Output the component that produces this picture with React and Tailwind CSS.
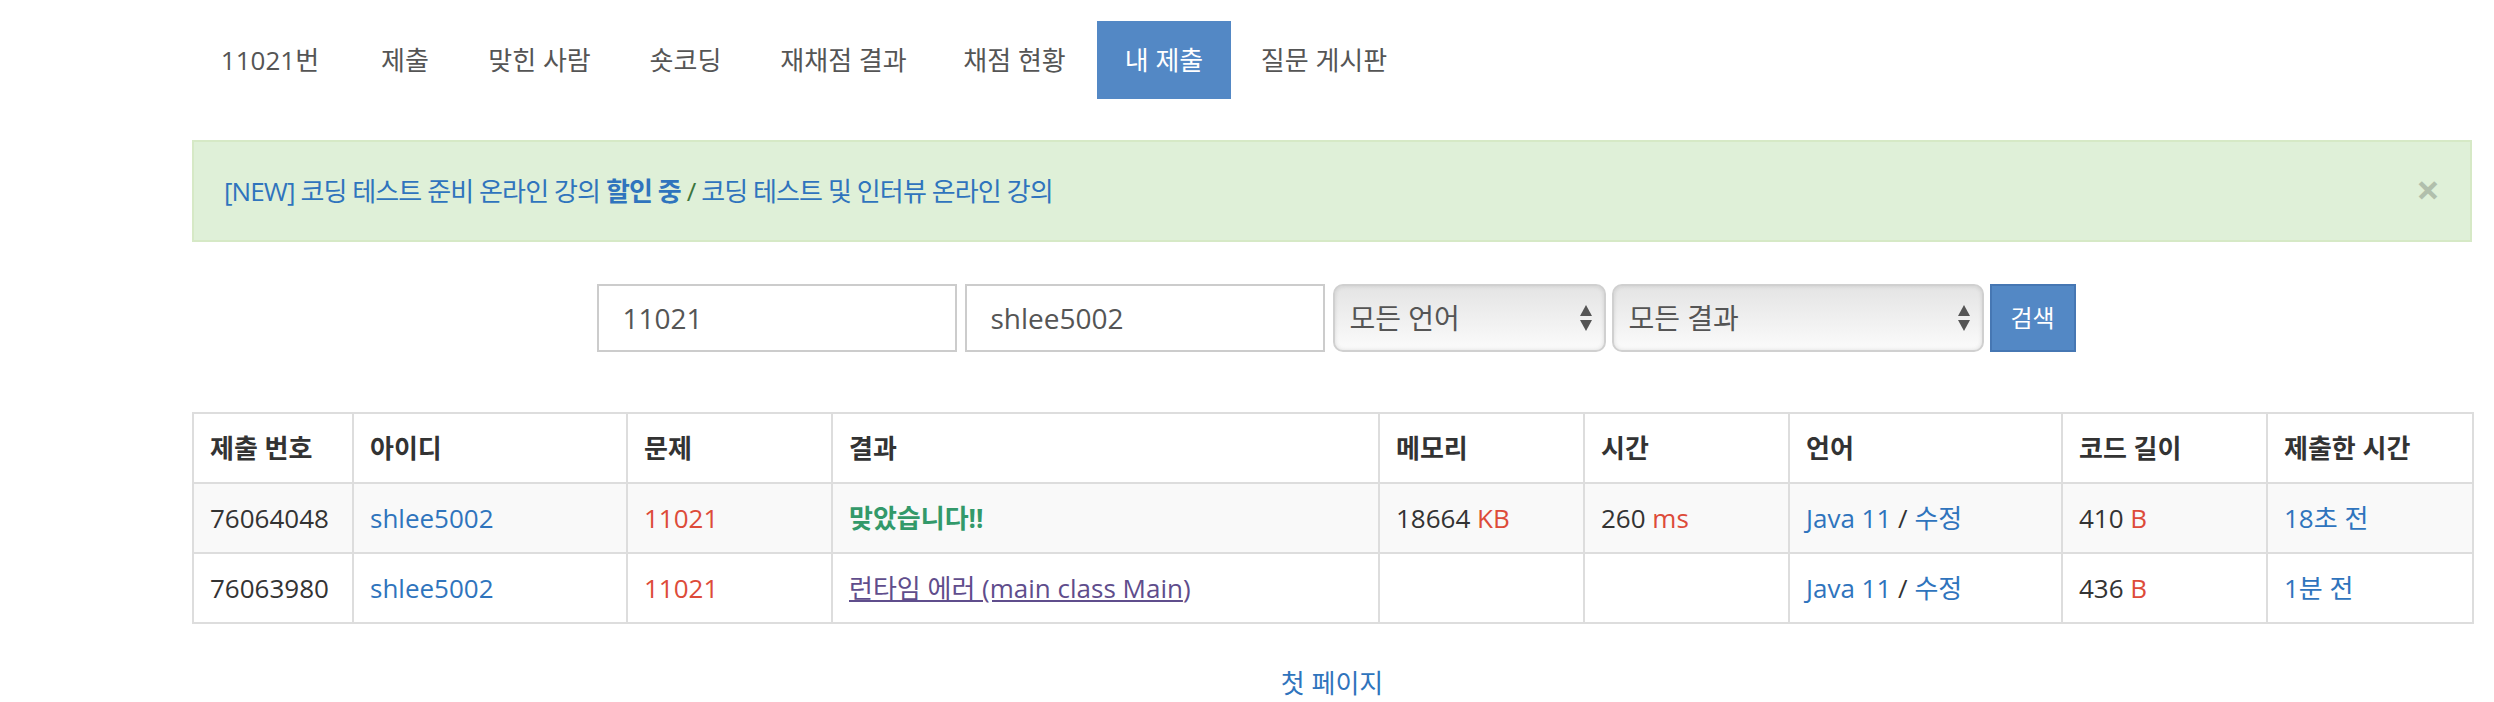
import React from "react";

const tabs = [
  { label: "11021번", w: "w-[154px]" },
  { label: "제출", w: "w-[108px]" },
  { label: "맞힌 사람", w: "w-[153px]" },
  { label: "숏코딩", w: "w-[131px]" },
  { label: "재채점 결과", w: "w-[177px]" },
  { label: "채점 현황", w: "w-[157px]" },
  { label: "내 제출", w: "w-[134px]", active: true },
  { label: "질문 게시판", w: "w-[178px]" },
];

const headers = ["제출 번호", "아이디", "문제", "결과", "메모리", "시간", "언어", "코드 길이", "제출한 시간"];
const colW = ["w-[160px]", "w-[274px]", "w-[205px]", "w-[547px]", "w-[205px]", "w-[205px]", "w-[273px]", "w-[205px]", "w-[206px]"];

function Arrows() {
  return (
    <svg width="12" height="26" viewBox="0 0 12 26" className="shrink-0">
      <polygon points="6,0 12,11 0,11" fill="#555" />
      <polygon points="0,15 12,15 6,26" fill="#555" />
    </svg>
  );
}

function Select({ label, w }) {
  return (
    <div
      className={`${w} h-[68px] rounded-[10px] border-2 border-[#d0d0d0] bg-gradient-to-b from-[#e4e4e4] to-[#fbfbfb] shadow-[inset_0_0_4px_rgba(0,0,0,0.12)] flex items-center justify-between pl-[15px] pr-[12px] text-[28px] text-[#555]`}
    >
      <span>{label}</span>
      <Arrows />
    </div>
  );
}

const td = "border-2 border-[#ddd] px-[16px] py-[16px] text-left align-middle whitespace-nowrap";
const link = "text-[#2f74bd]";
const red = "text-[#dd4b39]";

export default function App() {
  return (
    <div className="w-[2494px] h-[702px] overflow-hidden bg-white font-['Open_Sans','Noto_Sans_CJK_KR',sans-serif] text-[#333]">
      <div className="ml-[192px] w-[2280px] pt-[21px]">
        <nav className="flex gap-[4px] pl-[1px]">
          {tabs.map((t) => (
            <div
              key={t.label}
              className={`${t.w} h-[78px] flex items-center justify-center text-[26px] ${
                t.active ? "bg-[#5388c5] text-white" : "text-[#555]"
              }`}
            >
              {t.label}
            </div>
          ))}
        </nav>

        <div className="mt-[41px] h-[102px] border-2 border-[#d6e9c6] bg-[#dff0d8] px-[30px] flex items-center justify-between text-[26px]">
          <div className="tracking-[-0.9px]">
            <span className={link}>[NEW] 코딩 테스트 준비 온라인 강의 </span>
            <span className={`${link} font-bold`}>할인 중</span>
            <span className="text-[#3c763d]"> / </span>
            <span className={link}>코딩 테스트 및 인터뷰 온라인 강의</span>
          </div>
          <span className="text-[42px] font-bold leading-none text-black opacity-20 -mt-[4px]">×</span>
        </div>

        <div className="mt-[42px] flex justify-center pl-[8px]">
          <div className="w-[360px] h-[68px] border-2 border-[#ccc] px-[24px] flex items-center text-[28px] text-[#555]">11021</div>
          <div className="ml-[8px] w-[360px] h-[68px] border-2 border-[#ccc] px-[24px] flex items-center text-[28px] text-[#555]">shlee5002</div>
          <div className="ml-[8px]">
            <Select label="모든 언어" w="w-[273px]" />
          </div>
          <div className="ml-[6px]">
            <Select label="모든 결과" w="w-[372px]" />
          </div>
          <div className="ml-[6px] w-[86px] h-[68px] bg-[#5388c5] border-2 border-[#4677b3] flex items-center justify-center text-white text-[24px]">
            검색
          </div>
        </div>

        <table className="mt-[60px] w-[2280px] table-fixed border-collapse border-2 border-[#ddd] text-[26px] leading-[36px]">
          <colgroup>
            {colW.map((w, i) => (
              <col key={i} className={w} />
            ))}
          </colgroup>
          <thead>
            <tr>
              {headers.map((h) => (
                <th key={h} className={`${td} font-bold`}>
                  {h}
                </th>
              ))}
            </tr>
          </thead>
          <tbody>
            <tr className="bg-[#f9f9f9]">
              <td className={td}>76064048</td>
              <td className={td}><span className={link}>shlee5002</span></td>
              <td className={td}><span className={red}>11021</span></td>
              <td className={td}><span className="text-[#33996a] font-bold">맞았습니다!!</span></td>
              <td className={td}>18664 <span className={red}>KB</span></td>
              <td className={td}>260 <span className={red}>ms</span></td>
              <td className={td}><span className={link}>Java 11</span> / <span className={link}>수정</span></td>
              <td className={td}>410 <span className={red}>B</span></td>
              <td className={td}><span className={link}>18초 전</span></td>
            </tr>
            <tr className="bg-white">
              <td className={td}>76063980</td>
              <td className={td}><span className={link}>shlee5002</span></td>
              <td className={td}><span className={red}>11021</span></td>
              <td className={td}>
                <span className="text-[#5f4d8c] underline">런타임 에러 (main class Main</span>
                <span className="text-[#5f4d8c]">)</span>
              </td>
              <td className={td}></td>
              <td className={td}></td>
              <td className={td}><span className={link}>Java 11</span> / <span className={link}>수정</span></td>
              <td className={td}>436 <span className={red}>B</span></td>
              <td className={td}><span className={link}>1분 전</span></td>
            </tr>
          </tbody>
        </table>

        <div className="mt-[40px] text-center leading-[38px] text-[26px]">
          <span className={link}>첫 페이지</span>
        </div>
      </div>
    </div>
  );
}
